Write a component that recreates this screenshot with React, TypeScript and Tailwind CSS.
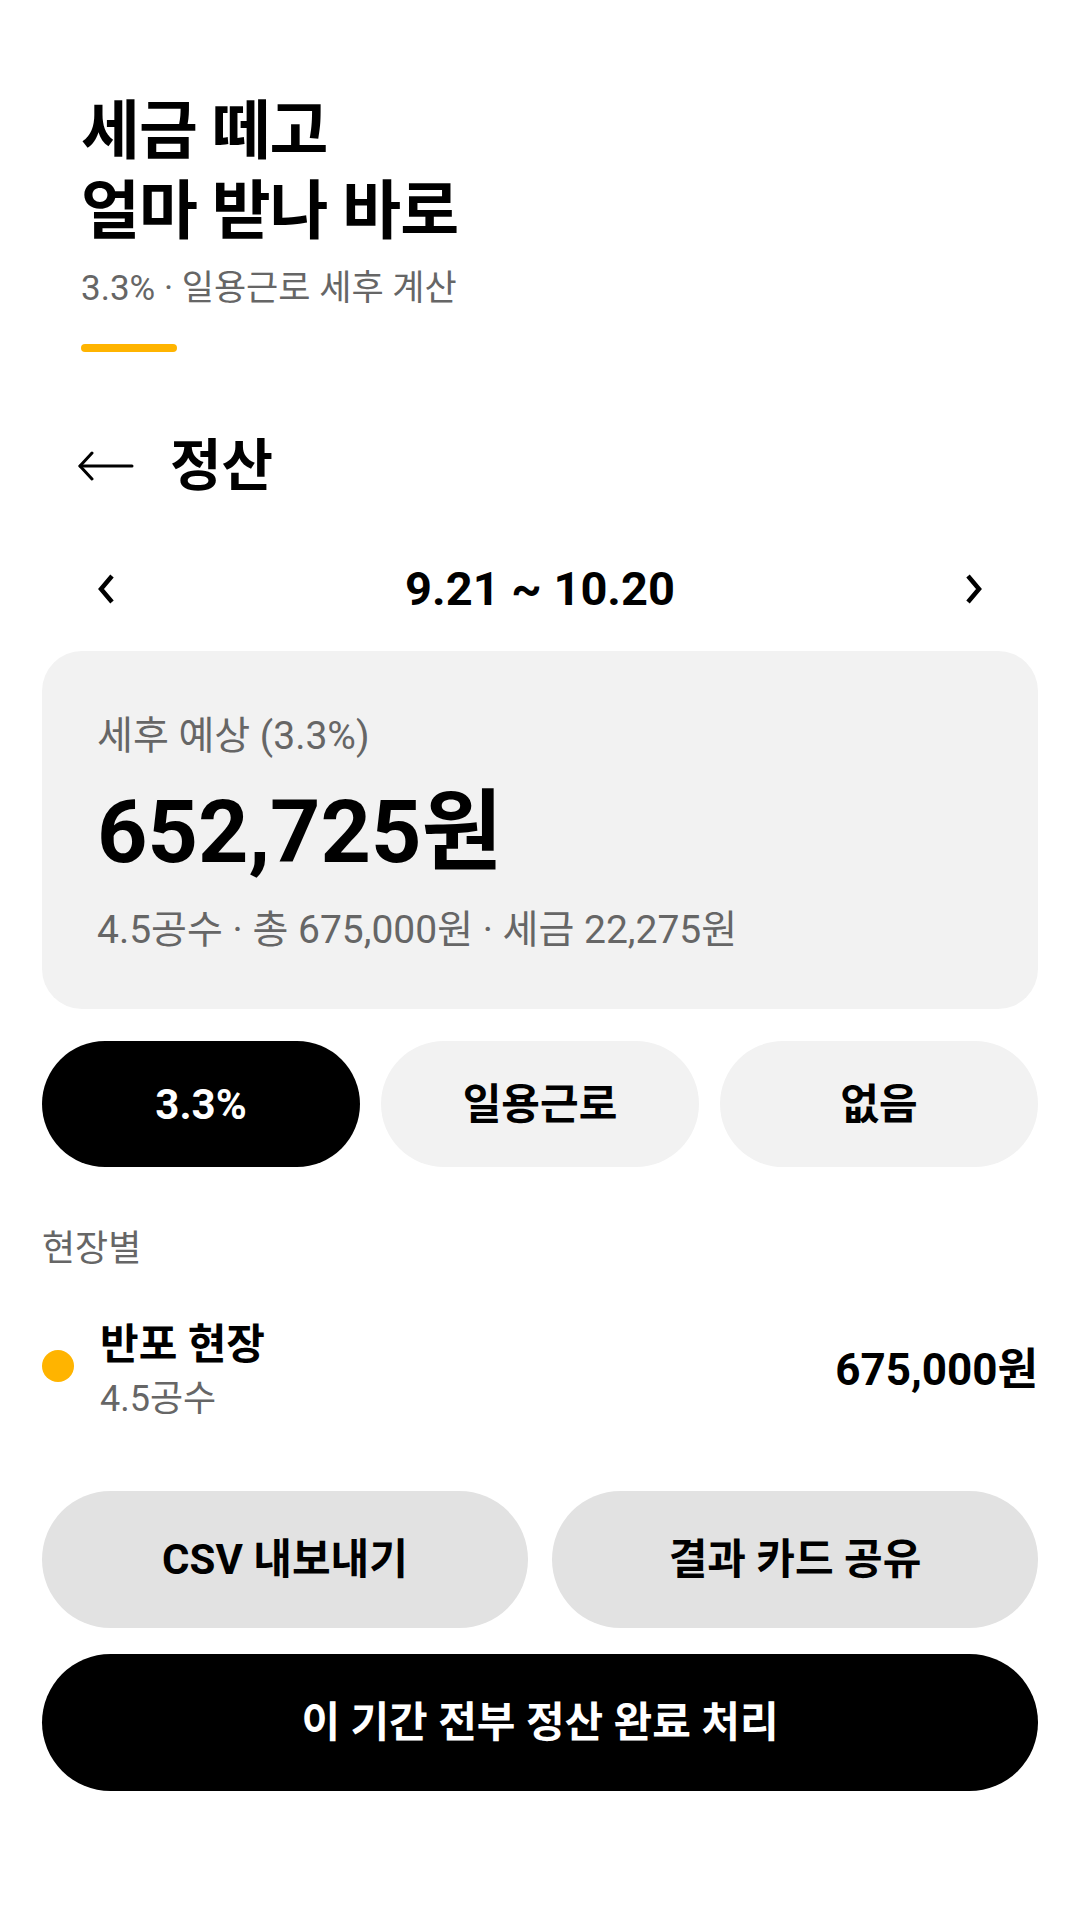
import React from "react"

function ArrowLeft() {
  return (
    <svg width="57" height="30" viewBox="0 0 57 30" fill="none" stroke="currentColor" strokeWidth="3" strokeLinecap="round" strokeLinejoin="round">
      <path d="M3 15 H55" />
      <path d="M15 2 L3 15 L15 28" />
    </svg>
  )
}

function Chevron({ dir }: { dir: "left" | "right" }) {
  return (
    <svg width="16" height="30" viewBox="0 0 16 30" fill="none" stroke="currentColor" strokeWidth="4.5" strokeLinejoin="miter">
      {dir === "left" ? <path d="M14 2 L3 15 L14 28" /> : <path d="M2 2 L13 15 L2 28" />}
    </svg>
  )
}

const modes = ["3.3%", "일용근로", "없음"]

export default function App() {
  const active = "3.3%"

  return (
    <div className="min-h-screen bg-white text-black font-['Roboto','Noto_Sans_CJK_KR',sans-serif]">
      {/* 상단 타이틀 */}
      <div className="pl-[81px] pt-[92px]">
        <h1 className="text-[64px] font-bold leading-[80px] tracking-[-1px]">
          세금 떼고
          <br />
          얼마 받나 바로
        </h1>
        <p className="mt-[15px] text-[35px] leading-[44px] text-[#666]">3.3% · 일용근로 세후 계산</p>
        <div className="mt-[33px] h-2 w-24 rounded-full bg-[#ffb400]" />
      </div>

      <div className="px-[42px] pb-[120px]">
        {/* 헤더 */}
        <div className="mt-[82px] flex h-16 items-center gap-[36px] pl-[35px]">
          <ArrowLeft />
          <h2 className="text-[56px] font-bold leading-[64px]">정산</h2>
        </div>

        {/* 기간 선택 */}
        <div className="mt-[61px] flex h-[60px] items-center justify-between px-[56px]">
          <Chevron dir="left" />
          <span className="text-[47px] font-bold leading-[60px]">9.21 ~ 10.20</span>
          <Chevron dir="right" />
        </div>

        {/* 요약 카드 */}
        <div className="mt-[32px] rounded-[40px] bg-[#f2f2f2] px-[55px] pb-[55px] pt-[61px]">
          <p className="text-[39px] leading-[48px] text-[#666]">세후 예상 (3.3%)</p>
          <p className="mt-[22px] text-[88px] font-bold leading-[100px]">652,725원</p>
          <p className="mt-[24px] text-[39px] leading-[48px] text-[#666]">
            4.5공수 · 총 675,000원 · 세금 22,275원
          </p>
        </div>

        {/* 세금 방식 */}
        <div className="mt-[32px] grid grid-cols-3 gap-[21px]">
          {modes.map((m) => (
            <button
              key={m}
              className={
                m === active
                  ? "h-[126px] rounded-full bg-black text-[42px] font-bold text-white"
                  : "h-[126px] rounded-full bg-[#f2f2f2] text-[42px] font-bold text-black"
              }
            >
              {m}
            </button>
          ))}
        </div>

        <p className="mt-[60px] text-[36px] leading-[44px] text-[#666]">현장별</p>

        {/* 현장 목록 */}
        <div className="mt-[48px] flex items-center justify-between">
          <div className="flex items-center gap-[26px]">
            <span className="mb-[8px] h-8 w-8 rounded-full bg-[#ffb400]" />
            <div>
              <p className="text-[42px] font-bold leading-[52px]">반포 현장</p>
              <p className="mt-[6px] text-[36px] leading-[44px] text-[#666]">4.5공수</p>
            </div>
          </div>
          <span className="text-[44px] font-bold">675,000원</span>
        </div>

        {/* 액션 */}
        <div className="mt-[70px] grid grid-cols-2 gap-6">
          <button className="h-[137px] rounded-full bg-[#e2e2e2] text-[42px] font-bold">CSV 내보내기</button>
          <button className="h-[137px] rounded-full bg-[#e2e2e2] text-[42px] font-bold">결과 카드 공유</button>
        </div>
        <button className="mt-[26px] h-[137px] w-full rounded-full bg-black text-[42px] font-bold text-white">
          이 기간 전부 정산 완료 처리
        </button>
      </div>
    </div>
  )
}
